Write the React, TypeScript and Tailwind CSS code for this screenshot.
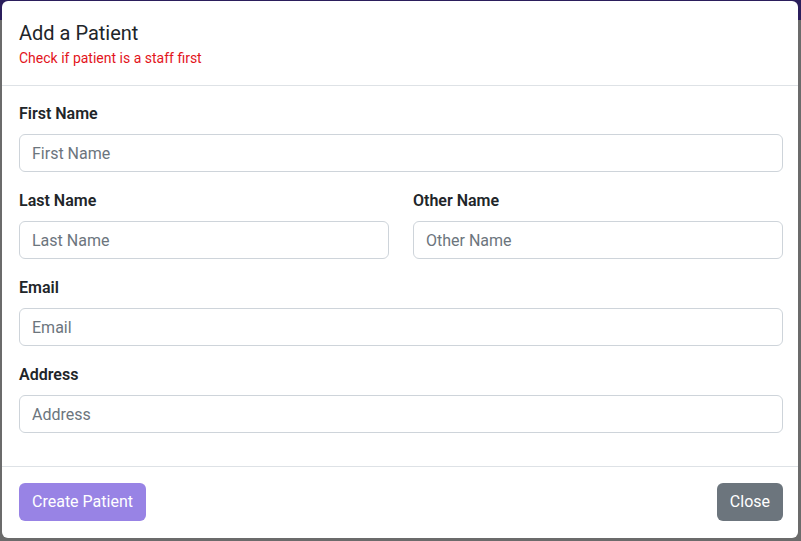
export default function App() {
  return (
    <div
      className="relative h-[541px] w-[801px] overflow-hidden bg-[#6b6b6b]"
      style={{ fontFamily: 'Roboto, "Liberation Sans", sans-serif' }}
    >
      <div className="h-[20px] bg-[#2b1e5c]" />
      {/* Modal */}
      <div className="absolute left-[2px] top-[1px] flex h-[537px] w-[796px] flex-col rounded-md bg-white">
        <div className="pl-[17px] pr-[15px] pb-[17px] pt-[19px] border-b border-[#dee2e6]">
          <h5 className="text-[20px] leading-[26px] text-[#212529]">Add a Patient</h5>
          <p className="mt-[2px] text-[14px] leading-[20px] text-[#e3141b]">Check if patient is a staff first</p>
        </div>

        <div className="flex-1 pl-[17px] pr-[15px] pt-[16px]">
          <div className="mb-[17px]">
            <label className="mb-[8px] block text-[16px] font-semibold leading-[24px] text-[#212529]">First Name</label>
            <input
              placeholder="First Name"
              className="h-[38px] w-full rounded-md border border-[#ced4da] px-3 text-[16px] text-[#212529] placeholder:text-[#6c757d] outline-none"
            />
          </div>
          <div className="mb-[17px] grid grid-cols-2 gap-6">
            <div>
              <label className="mb-[8px] block text-[16px] font-semibold leading-[24px] text-[#212529]">Last Name</label>
              <input
                placeholder="Last Name"
                className="h-[38px] w-full rounded-md border border-[#ced4da] px-3 text-[16px] text-[#212529] placeholder:text-[#6c757d] outline-none"
              />
            </div>
            <div>
              <label className="mb-[8px] block text-[16px] font-semibold leading-[24px] text-[#212529]">Other Name</label>
              <input
                placeholder="Other Name"
                className="h-[38px] w-full rounded-md border border-[#ced4da] px-3 text-[16px] text-[#212529] placeholder:text-[#6c757d] outline-none"
              />
            </div>
          </div>
          <div className="mb-[17px]">
            <label className="mb-[8px] block text-[16px] font-semibold leading-[24px] text-[#212529]">Email</label>
            <input
              placeholder="Email"
              className="h-[38px] w-full rounded-md border border-[#ced4da] px-3 text-[16px] text-[#212529] placeholder:text-[#6c757d] outline-none"
            />
          </div>
          <div>
            <label className="mb-[8px] block text-[16px] font-semibold leading-[24px] text-[#212529]">Address</label>
            <input
              placeholder="Address"
              className="h-[38px] w-full rounded-md border border-[#ced4da] px-3 text-[16px] text-[#212529] placeholder:text-[#6c757d] outline-none"
            />
          </div>
        </div>

        <div className="flex items-center justify-between border-t border-[#dee2e6] pl-[17px] pr-[15px] pb-[17px] pt-[16px]">
          <button className="h-[38px] rounded-md bg-[#9883e5] px-[13px] text-[16px] text-white">Create Patient</button>
          <button className="h-[38px] rounded-md bg-[#6c757d] px-[13px] text-[16px] text-white">Close</button>
        </div>
      </div>
    </div>
  );
}
